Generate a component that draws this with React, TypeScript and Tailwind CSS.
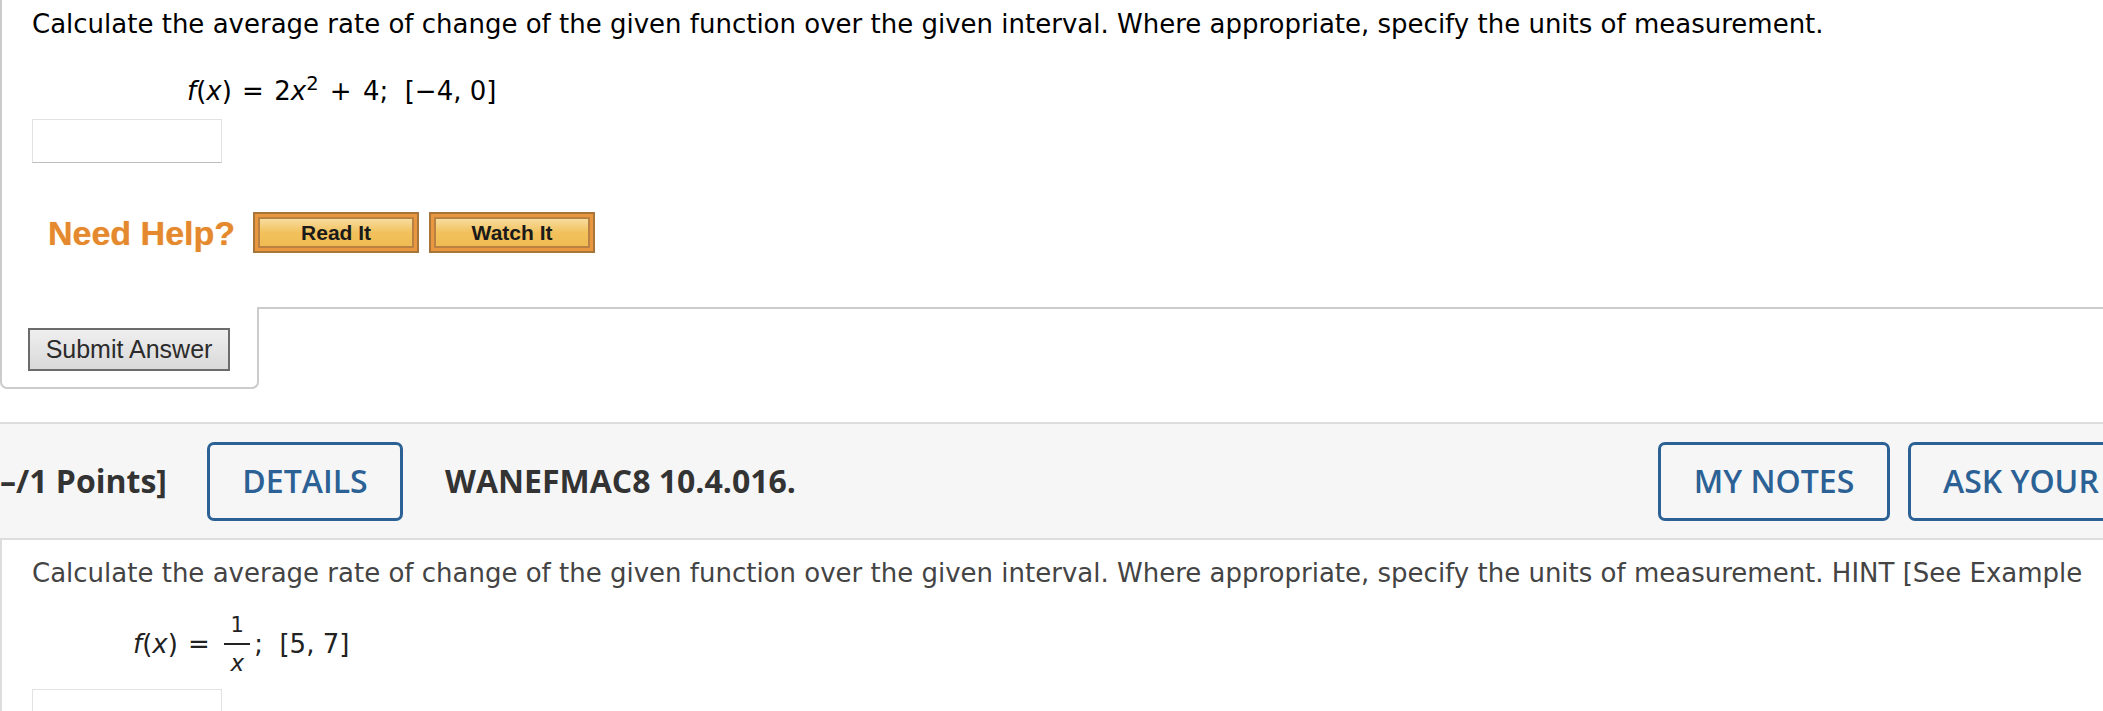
import React from "react";

function Formula1() {
  return (
    <div className="ml-[155px] mt-[35px] text-[26px] leading-[30px] text-black whitespace-pre">
      <i>f</i>(<i>x</i>)<span className="mx-[2px]"> = </span>2<i>x</i>
      <sup>2</sup>
      <span className="mx-[3px]"> + </span>4;  [−4, 0]
    </div>
  );
}

function OrangeButton({ label, className }: { label: string; className?: string }) {
  return (
    <div
      className={
        "h-[41px] w-[166px] border-2 border-[#a8743a] bg-[#e8973f] p-[3px] " + (className ?? "")
      }
    >
      <div className="flex h-full w-full items-center justify-center border-2 border-[#b98142] bg-gradient-to-b from-[#f7dc9c] via-[#f2c15c] to-[#f0bb52] font-['Liberation_Sans'] text-[21px] font-bold leading-none text-[#1a1a1a]">
        {label}
      </div>
    </div>
  );
}

function BlueButton({ label, className }: { label: string; className?: string }) {
  return (
    <div
      className={
        "flex h-[79px] shrink-0 items-center justify-center rounded-[7px] border-[3px] border-[#2b6195] font-['Open_Sans'] text-[32px] font-semibold text-[#2b6195] " +
        (className ?? "")
      }
    >
      {label}
    </div>
  );
}

export default function App() {
  return (
    <div className="relative h-[711px] w-[2103px] overflow-hidden bg-white font-['DejaVu_Sans',sans-serif]">
      {/* Question 1 */}
      <div className="flex flex-col">
        <div className="h-[307px] border-l-2 border-[#cccccc] pl-[30px] pt-[7px]">
          <div className="whitespace-nowrap text-[26px] leading-[34px] text-black">
            Calculate the average rate of change of the given function over the given interval. Where appropriate, specify the units of measurement.
          </div>
          <Formula1 />
          <div className="mt-[13px] h-[44px] w-[190px] border border-[#e2e2e2] border-b-[#bdbdbd]" />
          <div className="mt-[49px] flex items-center">
            <span className="ml-[16px] font-['Liberation_Sans'] text-[34px] font-bold leading-none text-[#e5892f] [text-shadow:0_0_1px_#f0b070]">
              Need Help?
            </span>
            <OrangeButton label="Read It" className="ml-[18px]" />
            <OrangeButton label="Watch It" className="ml-[10px]" />
          </div>
        </div>
        <div className="flex">
          <div className="h-[82px] w-[259px] shrink-0 rounded-b-[7px] border-x-2 border-b-2 border-[#cccccc] pl-[26px] pt-[21px]">
            <div className="flex h-[43px] w-[202px] items-center justify-center border-2 border-[#6b6b6b] bg-gradient-to-b from-[#efefef] to-[#d9d9d9] font-['Liberation_Sans'] text-[25px] leading-none text-[#2b2b2b]">
              Submit Answer
            </div>
          </div>
          <div className="flex-1 border-t-2 border-[#cccccc]" />
        </div>
      </div>

      {/* Question 2 header */}
      <div className="mt-[33px] flex h-[118px] items-center border-y-2 border-[#dddddd] bg-[#f6f6f6] font-['Open_Sans']">
        <span className="w-[207px] shrink-0 whitespace-nowrap text-[32px] font-bold text-[#333333]">
          –/1 Points]
        </span>
        <BlueButton label="DETAILS" className="w-[196px]" />
        <span className="ml-[42px] w-[1213px] shrink-0 whitespace-nowrap text-[32px] font-bold text-[#333333]">
          WANEFMAC8 10.4.016.
        </span>
        <BlueButton label="MY NOTES" className="w-[232px]" />
        <BlueButton label="ASK YOUR" className="ml-[18px] w-[420px] justify-start pl-[32px]" />
      </div>

      {/* Question 2 body */}
      <div className="border-l-2 border-[#dddddd] pl-[30px] pt-[16px]">
        <div className="whitespace-nowrap text-[26px] leading-[34px] text-[#444444]">
          Calculate the average rate of change of the given function over the given interval. Where appropriate, specify the units of measurement. HINT [See Example
        </div>
        <div className="ml-[101px] mt-[17px] flex items-center whitespace-pre text-[26px] leading-[30px] text-[#222222]">
          <span>
            <i>f</i>(<i>x</i>)<span className="mx-[2px]"> = </span>
          </span>
          <span className="mx-[4px] inline-flex flex-col items-center">
            <span className="text-[21px] leading-[36px]">1</span>
            <span className="h-[2px] w-[26px] bg-[#222222]" />
            <span className="text-[23px] leading-[36px]">
              <i>x</i>
            </span>
          </span>
          <span>;  [5, 7]</span>
        </div>
        <div className="mt-[8px] h-[44px] w-[190px] border border-[#e2e2e2] border-b-[#bdbdbd]" />
      </div>
    </div>
  );
}
